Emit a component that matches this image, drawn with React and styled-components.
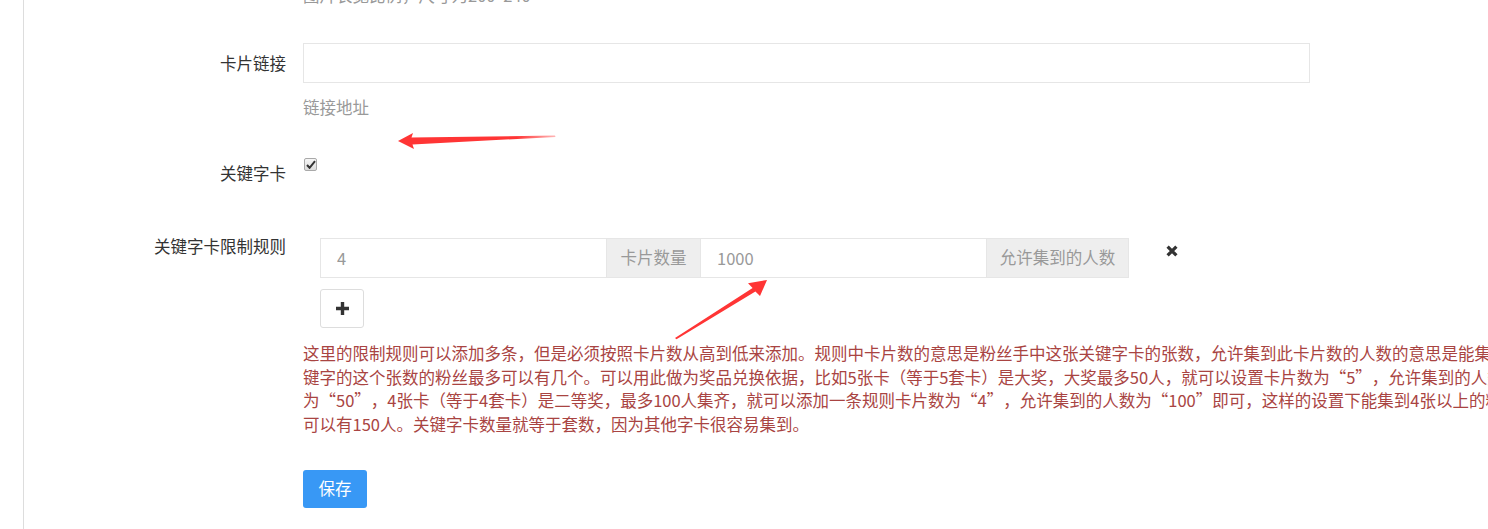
import React from "react";
import styled, { createGlobalStyle } from "styled-components";

const Global = createGlobalStyle`
  html, body {
    margin: 0;
    padding: 0;
    background: #fff;
    overflow: hidden;
  }
  body {
    font-family: "Noto Sans CJK SC", "Microsoft YaHei", sans-serif;
    font-size: 16.5px;
    line-height: 1.428571;
    color: #333;
    text-spacing-trim: space-all;
  }
  * { box-sizing: border-box; }
`;

const Page = styled.div`
  position: relative;
  width: 100%;
  height: 529px;
  overflow: hidden;
`;

const Panel = styled.div`
  margin-left: 23px;
  border-left: 1px solid #ddd;
  height: 529px;
  display: flex;
  flex-direction: column;
`;

const FormRow = styled.div`
  display: grid;
  grid-template-columns: 262px 1fr;
  column-gap: 17px;
  margin-top: ${(p) => p.$mt}px;
  flex-shrink: 0;
`;

const Label = styled.label`
  text-align: right;
  color: #333;
  white-space: nowrap;
  padding-top: ${(p) => p.$pt || 0}px;
  line-height: ${(p) => (p.$lh ? `${p.$lh}px` : "1.428571")};
`;

const Control = styled.div`
  display: flex;
  flex-direction: column;
  align-items: flex-start;
  padding-top: ${(p) => p.$pt || 0}px;
  min-width: 0;
`;

const TextInput = styled.input`
  width: 1007px;
  height: 40px;
  border: 1px solid #e6e6e6;
  border-radius: 0;
  padding: 0 16px;
  font: inherit;
  color: #555;
  outline: none;
  background: #fff;
`;

const Help = styled.div`
  color: #999;
  margin-top: ${(p) => p.$mt || 0}px;
  white-space: nowrap;
`;

const CheckBox = styled.span`
  display: inline-flex;
  align-items: center;
  justify-content: center;
  width: 13px;
  height: 13px;
  margin-left: 1px;
  border: 1px solid #a9a9a9;
  border-radius: 2px;
  background: linear-gradient(#f6f6f6, #dcdcdc);
`;

const RuleRow = styled.div`
  display: flex;
  align-items: flex-start;
  padding-left: 17px;
`;

const InputGroup = styled.div`
  display: flex;
  width: 809px;
  height: 40px;
`;

const GroupInput = styled.input`
  width: 287px;
  height: 40px;
  border: 1px solid #e6e6e6;
  padding: 0 16px;
  font: inherit;
  color: #999;
  outline: none;
  background: #fff;
`;

const Addon = styled.span`
  width: ${(p) => p.$w}px;
  height: 40px;
  display: flex;
  align-items: center;
  justify-content: center;
  background: #eee;
  color: #999;
  border-top: 1px solid #e6e6e6;
  border-bottom: 1px solid #e6e6e6;
  border-right: ${(p) => (p.$last ? "1px solid #e6e6e6" : "0")};
  white-space: nowrap;
`;

const RemoveBtn = styled.button`
  margin-left: 37px;
  margin-top: 7px;
  width: 12px;
  height: 12px;
  padding: 0;
  border: 0;
  background: none;
  display: flex;
  cursor: pointer;
`;

const AddBtn = styled.button`
  margin-top: 11px;
  margin-left: 17px;
  width: 44px;
  height: 39px;
  border: 1px solid #ddd;
  border-radius: 3px;
  background: #fff;
  display: flex;
  align-items: center;
  justify-content: center;
  padding: 0;
  cursor: pointer;
`;

const Note = styled.p`
  margin: 14px 0 0;
  color: #a94442;
  white-space: nowrap;
  text-spacing-trim: space-all;
`;

const SaveBtn = styled.button`
  margin-top: 33.5px;
  width: 64px;
  height: 38px;
  border: 0;
  border-radius: 3px;
  background: #3898f5;
  color: #fff;
  font: inherit;
  padding: 0;
  cursor: pointer;
`;

const Overlay = styled.svg`
  position: absolute;
  left: 0;
  top: 0;
  pointer-events: none;
`;

const noteLines = [
  "这里的限制规则可以添加多条，但是必须按照卡片数从高到低来添加。规则中卡片数的意思是粉丝手中这张关键字卡的张数，允许集到此卡片数的人数的意思是能集到这个关",
  "键字的这个张数的粉丝最多可以有几个。可以用此做为奖品兑换依据，比如5张卡（等于5套卡）是大奖，大奖最多50人，就可以设置卡片数为“5”，允许集到的人数",
  "为“50”，4张卡（等于4套卡）是二等奖，最多100人集齐，就可以添加一条规则卡片数为“4”，允许集到的人数为“100”即可，这样的设置下能集到4张以上的粉丝最多",
  "可以有150人。关键字卡数量就等于套数，因为其他字卡很容易集到。",
];

export default function App() {
  return (
    <Page>
      <Global />
      <Panel>
        <FormRow $mt={-16}>
          <span />
          <Control>
            <Help>图片长宽比例，尺寸为200*240</Help>
          </Control>
        </FormRow>

        <FormRow $mt={35.5}>
          <Label $lh={40}>卡片链接</Label>
          <Control>
            <TextInput type="text" />
            <Help $mt={12.5}>链接地址</Help>
          </Control>
        </FormRow>

        <FormRow $mt={39}>
          <Label $pt={4}>关键字卡</Label>
          <Control>
            <CheckBox role="checkbox" aria-checked="true">
              <svg width="10" height="9" viewBox="0 0 10 9">
                <path d="M1 5 L3.6 7.8 L9 1.2" fill="none" stroke="#333" strokeWidth="2" />
              </svg>
            </CheckBox>
          </Control>
        </FormRow>

        <FormRow $mt={49}>
          <Label>关键字卡限制规则</Label>
          <Control $pt={3.5}>
            <RuleRow>
              <InputGroup>
                <GroupInput defaultValue="4" />
                <Addon $w={93}>卡片数量</Addon>
                <GroupInput defaultValue="1000" />
                <Addon $w={142} $last>允许集到的人数</Addon>
              </InputGroup>
              <RemoveBtn aria-label="删除">
                <svg width="12" height="12" viewBox="0 0 12 12">
                  <path d="M1.6 1.6 L10.4 10.4 M10.4 1.6 L1.6 10.4" stroke="#333" strokeWidth="3.2" />
                </svg>
              </RemoveBtn>
            </RuleRow>
            <AddBtn aria-label="添加">
              <svg width="13" height="13" viewBox="0 0 13 13">
                <path d="M6.5 0 V13 M0 6.5 H13" stroke="#333" strokeWidth="3.4" />
              </svg>
            </AddBtn>
            <Note>
              {noteLines.map((l, i) => (
                <React.Fragment key={i}>
                  {l}
                  {i < noteLines.length - 1 && <br />}
                </React.Fragment>
              ))}
            </Note>
            <SaveBtn>保存</SaveBtn>
          </Control>
        </FormRow>
      </Panel>

      <Overlay width="1488" height="529" viewBox="0 0 1488 529">
        <defs>
          <linearGradient id="fade1" x1="398" y1="0" x2="556" y2="0" gradientUnits="userSpaceOnUse">
            <stop offset="0.75" stopColor="#ff3535" stopOpacity="1" />
            <stop offset="1" stopColor="#ff3535" stopOpacity="0.35" />
          </linearGradient>
        </defs>
        <polygon
          points="398,141 413,133 411.5,137.6 555,135.6 555.5,137 412.5,144.4 414,149"
          fill="url(#fade1)"
        />
        <polygon
          points="767,280 748,283.3 752.6,288 675,338 676.5,339.3 755.4,291.5 760,296"
          fill="#ff3535"
        />
      </Overlay>
    </Page>
  );
}
